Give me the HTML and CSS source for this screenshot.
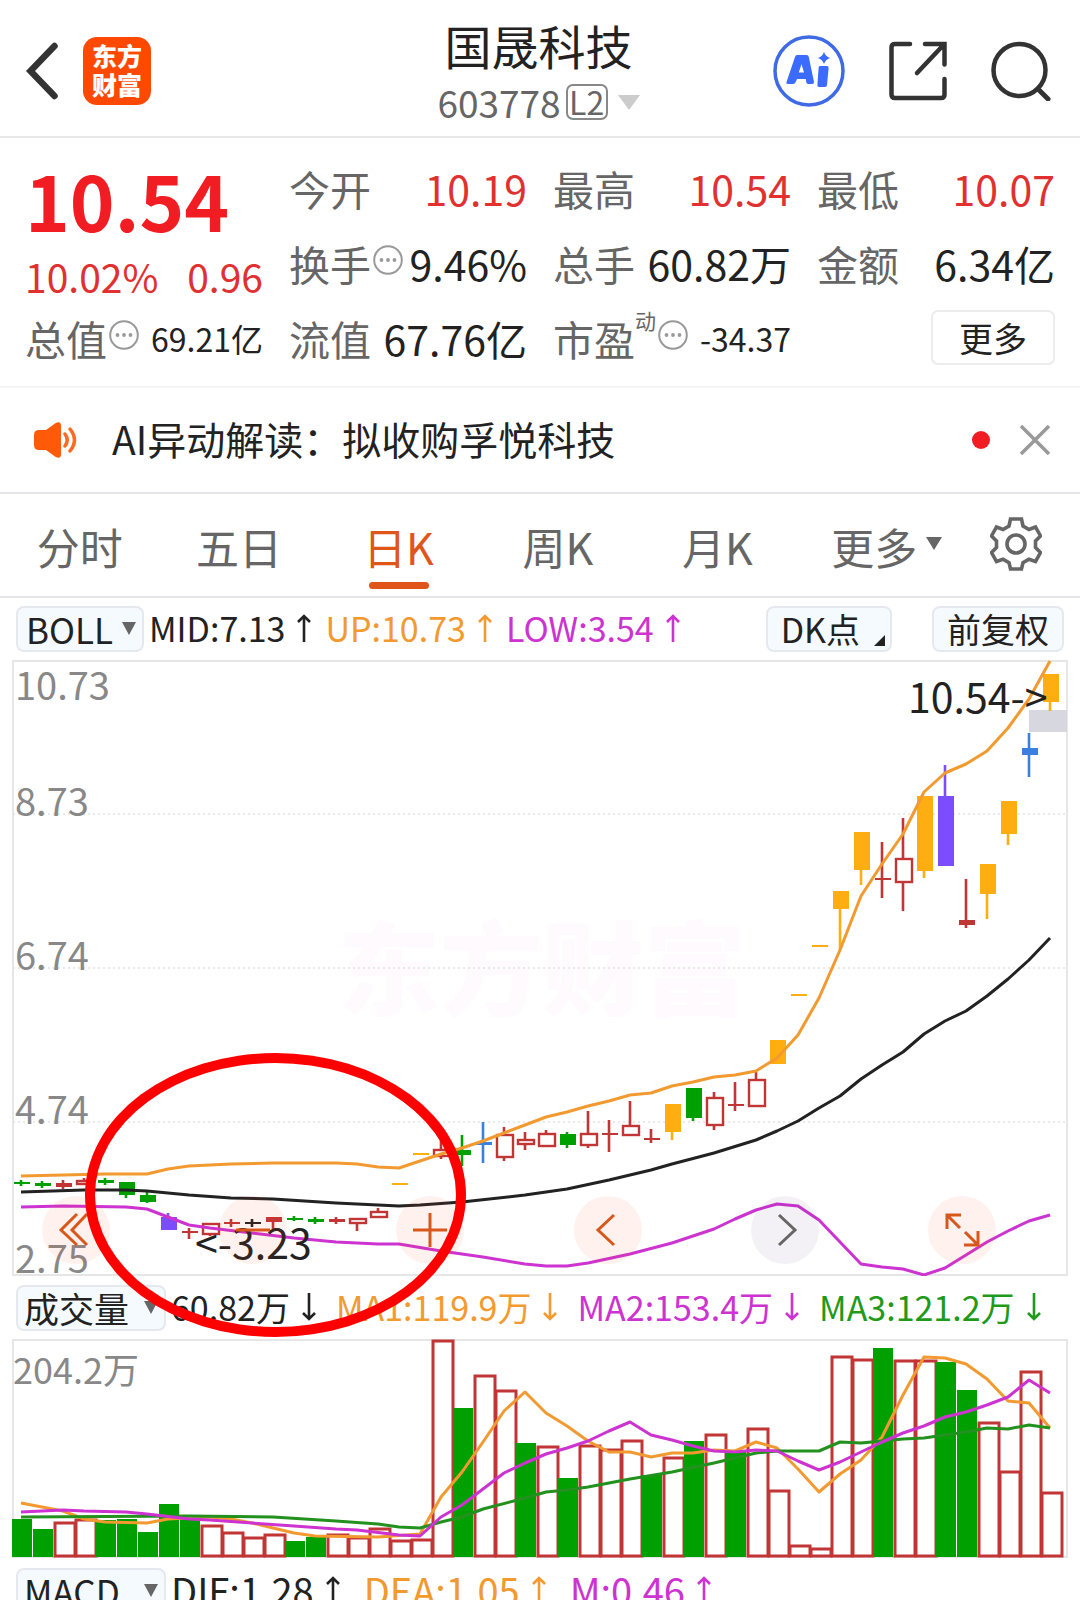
FILE: index.html
```html
<!DOCTYPE html>
<html lang="zh-CN">
<head>
  <meta charset="UTF-8" />
  <meta name="viewport" content="width=device-width, initial-scale=1.0"/>
  <title>国晟科技 603778</title>
  <link rel="stylesheet" href="styles.css">
</head>
<body>
  <svg class="defs" aria-hidden="true">
    <symbol id="up" viewBox="0 0 14 28"><path d="M7 28V2M1 8l6-6 6 6" fill="none" stroke="currentColor" stroke-width="2.6"/></symbol>
    <symbol id="down" viewBox="0 0 14 28"><path d="M7 0v26M1 20l6 6 6-6" fill="none" stroke="currentColor" stroke-width="2.6"/></symbol>
    <symbol id="dots" viewBox="0 0 30 30">
      <circle cx="15" cy="15" r="13.8" fill="none" stroke="#999" stroke-width="2"/>
      <g fill="#999"><circle cx="8.5" cy="15" r="1.9"/><circle cx="15" cy="15" r="1.9"/><circle cx="21.5" cy="15" r="1.9"/></g>
    </symbol>
  </svg>

  <header class="header">
    <div class="header-left">
      <button class="icon-btn" aria-label="返回">
        <svg width="32" height="58" viewBox="0 0 32 58"><path d="M28.500 4L4.500 29l24 25" fill="none" stroke="#333" stroke-width="6.500" stroke-linecap="round"/></svg>
      </button>
      <a class="logo" href="#"><span>东方</span><span>财富</span></a>
    </div>
    <div class="title">
      <h1>国晟科技</h1>
      <div class="code">603778<span class="level">L2</span><i class="caret-title"></i></div>
    </div>
    <div class="header-right">
      <button class="icon-btn" aria-label="AI">
        <svg width="72" height="72" viewBox="0 0 72 72">
          <circle cx="36" cy="36" r="34" fill="none" stroke="#3f6ae6" stroke-width="3.500"/>
          <path fill="#3b6bff" fill-rule="evenodd" d="M24 20h9.500q2 0 2.300 2L41 47q.2 2-1.800 2h-4q-1.700 0-2-2l-.4-3H24l-1.300 3q-.8 2-2.700 2h-5q-2.300 0-1.400-2.200L22 22q.7-2 2-2zM28.500 29l-2.700 8.500h5.200z"/>
          <path fill="#3b6bff" d="M47 31h7q1.800 0 1.600 2l-1.600 17q-.2 2-2 2h-6q-1.800 0-1.600-2l1.200-17q.1-2 1.400-2zM51 17q1.500 4.500 6 6-4.500 1.500-6 6-1.500-4.500-6-6 4.500-1.500 6-6z"/>
        </svg>
      </button>
      <button class="icon-btn" aria-label="分享">
        <svg width="58" height="60" viewBox="0 0 58 60"><path d="M21 3H6Q2.500 3 2.500 6.500v47Q2.500 57 6 57h46q3.500 0 3.500-3.500V38M36 3h19.500v20.500M54 4.500L28 32" fill="none" stroke="#333" stroke-width="4.500" stroke-linecap="round"/></svg>
      </button>
      <button class="icon-btn" aria-label="搜索">
        <svg width="60" height="60" viewBox="0 0 60 60"><circle cx="28.500" cy="29" r="26" fill="none" stroke="#333" stroke-width="4.500"/><path d="M47 48l10 10" stroke="#333" stroke-width="5" stroke-linecap="round"/></svg>
      </button>
    </div>
  </header>

  <section class="quote">
    <div class="price-box">
      <strong class="price">10.54</strong>
      <div class="change"><span>10.02%</span><span>0.96</span></div>
    </div>
    <div class="cell"><span class="name">今开</span><span class="value red">10.19</span></div>
    <div class="cell"><span class="name">最高</span><span class="value red">10.54</span></div>
    <div class="cell"><span class="name">最低</span><span class="value red">10.07</span></div>
    <div class="cell"><span class="name">换手<svg class="dots"><use href="#dots"/></svg></span><span class="value">9.46%</span></div>
    <div class="cell"><span class="name">总手</span><span class="value">60.82万</span></div>
    <div class="cell"><span class="name">金额</span><span class="value">6.34亿</span></div>
    <div class="cell"><span class="name">总值<svg class="dots"><use href="#dots"/></svg></span><span class="value small">69.21亿</span></div>
    <div class="cell"><span class="name">流值</span><span class="value">67.76亿</span></div>
    <div class="cell"><span class="name">市盈<sup>动</sup><svg class="dots"><use href="#dots"/></svg></span><span class="value small">-34.37</span></div>
    <div class="cell cell-more"><button class="more-btn">更多</button></div>
  </section>

  <section class="notice">
    <svg class="speaker" width="44" height="36" viewBox="0 0 44 36">
      <path d="M5 8h7l9-6.500Q27-2 27 4v28q0 6-6 2.500L12 28H5q-5 0-5-5V13q0-5 5-5z" fill="#ff5a0a"/>
      <path d="M31 12q4.500 6 0 12M36 7q9 11 0 22" fill="none" stroke="#ff6a20" stroke-width="3.500" stroke-linecap="round"/>
    </svg>
    <a class="notice-text" href="#">AI异动解读：拟收购孚悦科技</a>
    <i class="dot"></i>
    <button class="icon-btn" aria-label="关闭">
      <svg width="30" height="30" viewBox="0 0 30 30"><path d="M1 1l28 28M29 1L1 29" stroke="#999" stroke-width="3.500"/></svg>
    </button>
  </section>

  <nav class="tabs">
    <button class="tab">分时</button>
    <button class="tab">五日</button>
    <button class="tab active">日K</button>
    <button class="tab">周K</button>
    <button class="tab">月K</button>
    <button class="tab tab-more">更多<i class="caret"></i></button>
    <button class="icon-btn gear" aria-label="设置">
      <svg width="52" height="54" viewBox="0 0 52 54"><path d="M20.500 2h11l1.500 7 6 3.500 6.500-2.500 5 9-5 5v6.500l5 5-5 9-6.500-2.300-6 3.500-1.500 6.300h-11l-1.500-6.300-6-3.500-6.500 2.300-5-9 5-5V24l-5-5 5-9 6.500 2.500 6-3.500z" fill="none" stroke="#666" stroke-width="3.600"/><circle cx="26" cy="27" r="9" fill="none" stroke="#666" stroke-width="3.600"/></svg>
    </button>
  </nav>

  <main class="charts">
    <div class="bar">
      <label class="pick pick-boll"><select aria-label="主图指标"><option>BOLL</option></select></label>
      <div class="legend">
        <span>MID:7.13<svg class="arrow"><use href="#up"/></svg></span>
        <span class="orange">UP:10.73<svg class="arrow"><use href="#up"/></svg></span>
        <span class="purple">LOW:3.54<svg class="arrow"><use href="#up"/></svg></span>
      </div>
      <div class="bar-right">
        <button class="pill pill-dk">DK点<i class="corner"></i></button>
        <button class="pill">前复权</button>
      </div>
    </div>

    <div class="panel">
      <svg id="kline" class="chart" viewBox="12 660 1056 616"></svg>
      <div class="tools">
        <button class="tool" aria-label="最早"><svg viewBox="0 0 68 68"><path d="M35 18L19 34l16 15M45 18L30 34l15 15"/></svg></button>
        <button class="tool" aria-label="缩小"><svg viewBox="0 0 68 68"><path d="M17 34h34"/></svg></button>
        <button class="tool" aria-label="放大"><svg viewBox="0 0 68 68"><path d="M17 34h34M34 17v34"/></svg></button>
        <button class="tool" aria-label="向左"><svg viewBox="0 0 68 68"><path d="M40 19L24 34l16 15"/></svg></button>
        <button class="tool grey" aria-label="向右"><svg viewBox="0 0 68 68"><path d="M28 19l16 15-16 15"/></svg></button>
        <button class="tool" aria-label="全屏"><svg viewBox="0 0 68 68"><path d="M33 19H19v14M19 19l13 13M36 49h14V35M50 49L37 36"/></svg></button>
      </div>
    </div>

    <div class="bar bar-sub">
      <label class="pick"><select aria-label="副图指标"><option>成交量</option></select></label>
      <div class="legend legend-vol">
        <span>60.82万<svg class="arrow"><use href="#down"/></svg></span>
        <span class="orange">MA1:119.9万<svg class="arrow"><use href="#down"/></svg></span>
        <span class="purple">MA2:153.4万<svg class="arrow"><use href="#down"/></svg></span>
        <span class="green">MA3:121.2万<svg class="arrow"><use href="#down"/></svg></span>
      </div>
    </div>

    <div class="panel">
      <svg id="volume" class="chart" viewBox="12 1339 1056 219"></svg>
    </div>

    <div class="bar bar-macd">
      <label class="pick"><select aria-label="副图指标二"><option>MACD</option></select></label>
      <div class="legend legend-macd">
        <span>DIF:1.28<svg class="arrow"><use href="#up"/></svg></span>
        <span class="orange">DEA:1.05<svg class="arrow"><use href="#up"/></svg></span>
        <span class="purple">M:0.46<svg class="arrow"><use href="#up"/></svg></span>
      </div>
    </div>

    <div class="circle-mark"></div>
  </main>

  <script src="script.js"></script>
</body>
</html>
```
FILE: styles.css
```css
* {
  box-sizing: border-box;
}
body {
  margin: 0;
  height: 100vh;
  overflow: hidden;
  background: #fff;
  color: #222;
  font-family: "Noto Sans CJK SC", sans-serif;
}
button, select {
  font-family: inherit;
  color: inherit;
  cursor: pointer;
}
button {
  padding: 0;
  border: none;
  background: none;
}
a {
  color: inherit;
  text-decoration: none;
}
.defs {
  display: none;
}
.icon-btn {
  display: flex;
}

/* header */
.header {
  display: grid;
  grid-template-columns: 1fr auto 1fr;
  align-items: center;
  height: 138px;
  padding: 0 29px 0 26px;
  border-bottom: 2px solid #e8e8e8;
}
.header-left {
  display: flex;
  align-items: center;
  gap: 25px;
  padding-top: 6px;
}
.logo {
  display: flex;
  flex-direction: column;
  align-items: center;
  width: 68px;
  height: 68px;
  padding-top: 4px;
  border-radius: 14px;
  background: #ff4800;
  color: #fff;
  font-size: 25px;
  font-weight: 900;
  line-height: 29px;
}
.title {
  padding-top: 12px;
  text-align: center;
}
h1 {
  margin: 0;
  font-size: 47px;
  font-weight: 400;
  line-height: 56px;
}
.code {
  display: flex;
  align-items: center;
  justify-content: center;
  color: #666;
  font-size: 37px;
  line-height: 58px;
}
.level {
  width: 42px;
  height: 36px;
  margin-left: 5px;
  border: 2px solid #888;
  border-radius: 7px;
  font-size: 32px;
  line-height: 31px;
}
.caret-title {
  margin-left: 10px;
  border: 11px solid transparent;
  border-top: 15px solid #ccc;
  border-bottom: none;
}
.header-right {
  display: flex;
  align-items: center;
  justify-content: flex-end;
  gap: 44px;
  padding-top: 6px;
}

/* quote */
.quote {
  display: grid;
  grid-template-columns: repeat(4, 1fr);
  grid-auto-rows: 75px;
  column-gap: 26px;
  padding: 12px 25px 11px;
  border-bottom: 2px solid #f4f4f4;
}
.price-box {
  grid-row: span 2;
  color: #e03030;
}
.price {
  display: block;
  color: #f21d22;
  font-size: 76px;
  font-weight: 700;
  line-height: 98px;
}
.change {
  display: flex;
  justify-content: space-between;
  font-size: 39px;
  line-height: 56px;
}
.cell {
  display: flex;
  align-items: center;
  justify-content: space-between;
  font-size: 41px;
  line-height: 60px;
  white-space: nowrap;
}
.name {
  display: flex;
  align-items: center;
  color: #666;
}
.name sup {
  align-self: flex-start;
  font-size: 21px;
  line-height: 24px;
}
.dots {
  width: 30px;
  height: 30px;
  margin: 0 0 6px 2px;
}
.value.small {
  font-size: 32px;
}
.red {
  color: #e03030;
}
.cell-more {
  justify-content: flex-end;
}
.more-btn {
  width: 124px;
  height: 55px;
  border: 2px solid #ececec;
  border-radius: 7px;
  font-size: 34px;
  line-height: 48px;
}

/* notice */
.notice {
  display: flex;
  align-items: center;
  height: 106px;
  padding: 0 30px 0 34px;
  border-bottom: 2px solid #e6e6ea;
}
.notice-text {
  flex: 1;
  margin-left: 34px;
  padding-bottom: 4px;
  font-size: 39px;
}
.dot {
  width: 18px;
  height: 18px;
  margin-right: 30px;
  border-radius: 50%;
  background: #f21d22;
}

/* tabs */
.tabs {
  display: grid;
  grid-template-columns: repeat(6, 4fr) 3fr;
  height: 104px;
  padding-right: 4px;
  border-bottom: 2px solid #e6e6ea;
}
.tab {
  display: flex;
  flex-direction: column;
  align-items: center;
  color: #666;
  font-size: 43px;
  line-height: 104px;
}
.tab.active {
  color: #e0561a;
}
.tab.active::after {
  content: "";
  width: 60px;
  height: 7px;
  margin-top: -16px;
  border-radius: 4px;
  background: #e0561a;
}
.tab-more {
  flex-direction: row;
  justify-content: center;
  padding-left: 20px;
}
.caret {
  margin: 0 0 6px 9px;
  border: 8px solid transparent;
  border-top: 13px solid #666;
  border-bottom: none;
}
.gear {
  align-items: center;
  justify-content: center;
  padding-bottom: 4px;
}

/* charts */
.charts {
  position: relative;
}
.bar {
  display: flex;
  align-items: center;
  height: 62px;
  padding: 0 16px;
  white-space: nowrap;
}
.bar-sub {
  height: 63px;
}
.pick {
  position: relative;
}
.pick select {
  display: block;
  appearance: none;
  width: 150px;
  height: 46px;
  padding: 0 0 0 6px;
  border: 2px solid #e6e8f0;
  border-radius: 8px;
  background: #f5faff;
  font-size: 35px;
  line-height: 40px;
}
.pick-boll select {
  width: 128px;
  padding-left: 8px;
}
.pick::after {
  content: "";
  position: absolute;
  right: 8px;
  top: 16px;
  border: 7px solid transparent;
  border-top: 13px solid #666;
  border-bottom: none;
  pointer-events: none;
}
.legend {
  display: flex;
  gap: 14px;
  margin-left: 5px;
  padding-bottom: 2px;
  font-size: 34px;
  line-height: 46px;
}
.legend span {
  display: flex;
  align-items: center;
}
.legend-vol {
  gap: 20px;
}
.legend-macd {
  gap: 24px;
  font-size: 38px;
}
.arrow {
  width: 14px;
  height: 28px;
  margin-left: 12px;
}
.orange {
  color: #f29a30;
}
.purple {
  color: #cc33d0;
}
.green {
  color: #1f9a1a;
}
.bar-right {
  display: flex;
  gap: 40px;
  margin-left: auto;
}
.pill {
  position: relative;
  height: 46px;
  padding: 0 13px;
  border: 2px solid #e6e8f0;
  border-radius: 8px;
  background: #f5faff;
  font-size: 34px;
  line-height: 40px;
}
.pill-dk {
  padding: 0 30px 0 13px;
}
.corner {
  position: absolute;
  right: 5px;
  bottom: 4px;
  border-left: 11px solid transparent;
  border-bottom: 11px solid #222;
}
.panel {
  position: relative;
  padding: 0 12px;
}
.chart {
  display: block;
  width: 100%;
}
.tools {
  position: absolute;
  left: 42px;
  right: 84px;
  bottom: 12px;
  display: flex;
  justify-content: space-between;
}
.tool {
  width: 68px;
  height: 68px;
  border-radius: 50%;
  background: rgba(255, 80, 30, 0.08);
}
.tool path {
  fill: none;
  stroke: #d8581c;
  stroke-width: 3;
}
.tool.grey {
  background: rgba(90, 50, 130, 0.07);
}
.tool.grey path {
  stroke: #666;
}
.bar-macd {
  height: 66px;
}

/* red circle drawn over both charts */
.circle-mark {
  position: absolute;
  left: 85px;
  top: 455px;
  width: 381px;
  height: 284px;
  border: 10px solid #f00;
  border-radius: 50%;
  pointer-events: none;
}

/* svg chart texts */
.axis {
  fill: #888;
  font-size: 38px;
}
.axis-vol {
  fill: #888;
  font-size: 36px;
}
.mark {
  fill: #222;
  font-size: 41px;
}
.watermark {
  fill: #fefafe;
  font-size: 102px;
  font-weight: 900;
}
```
FILE: script.js
```js
const RED = '#c23535';
const GREEN = '#00a000';
const YELLOW = '#ffae12';
const BLUE = '#3a80dc';
const VIOLET = '#7c4dff';
const STEP = 21;
const cx = (i) => 21 + i * STEP;

// type, body top, body bottom, wick top, wick bottom
// r = hollow red, R = solid red, g = green, y = yellow, b = blue, v = violet, k = black
const candles = [
  ['g', 1182, 1184, 1180, 1186], ['g', 1183, 1186, 1181, 1188], ['R', 1183, 1187, 1180, 1189],
  ['r', 1180, 1185, 1178, 1185], ['g', 1180, 1183, 1178, 1185], ['g', 1182, 1195, 1182, 1198],
  ['g', 1195, 1202, 1192, 1203], ['v', 1217, 1230, 1213, 1230], ['R', 1231, 1233, 1228, 1239],
  ['r', 1223, 1235, 1223, 1236], ['R', 1222, 1224, 1219, 1227], ['k', 1222, 1224, 1219, 1227],
  ['R', 1217, 1222, 1217, 1229], ['g', 1218, 1220, 1216, 1221], ['g', 1219, 1222, 1217, 1224],
  ['R', 1219, 1222, 1217, 1224], ['r', 1218, 1224, 1218, 1231], ['r', 1211, 1218, 1208, 1218],
  ['y', 1183, 1185, 1184, 1184], ['y', 1153, 1155, 1154, 1154], ['r', 1149, 1157, 1140, 1159],
  ['g', 1150, 1155, 1135, 1166], ['b', 1142, 1145, 1122, 1163], ['r', 1134, 1158, 1127, 1161],
  ['r', 1139, 1145, 1132, 1150], ['r', 1133, 1147, 1130, 1147], ['g', 1134, 1145, 1132, 1148],
  ['r', 1133, 1146, 1111, 1148], ['R', 1133, 1135, 1120, 1152], ['r', 1125, 1136, 1101, 1136],
  ['R', 1138, 1140, 1129, 1143], ['y', 1104, 1132, 1104, 1140], ['g', 1088, 1118, 1088, 1121],
  ['r', 1097, 1126, 1092, 1130], ['R', 1104, 1106, 1082, 1111], ['r', 1079, 1107, 1072, 1107],
  ['y', 1040, 1064, 1040, 1064], ['y', 994, 996, 995, 995], ['y', 945, 947, 946, 946],
  ['y', 891, 909, 891, 950], ['y', 832, 870, 832, 885], ['R', 878, 880, 842, 898],
  ['r', 858, 883, 818, 911], ['y', 796, 871, 796, 878], ['v', 796, 866, 765, 866],
  ['R', 920, 925, 879, 928], ['y', 864, 894, 864, 919], ['y', 801, 834, 801, 845],
  ['b', 748, 755, 733, 777], ['y', 674, 702, 674, 711]
];

// [index, y] pairs
const up = [[0,1176],[4,1174],[6,1174],[7,1169],[8,1166],[10,1164],[12,1163],[15,1163],[16,1164],[17,1167],[18,1168],[19,1161],[20,1154],[21,1148],[22,1141],[23,1133],[24,1125],[25,1117],[26,1112],[27,1106],[28,1101],[29,1095],[30,1093],[31,1086],[32,1082],[33,1077],[34,1075],[35,1071],[36,1058],[37,1035],[38,998],[39,950],[40,896],[41,864],[42,834],[43,792],[44,773],[45,764],[46,751],[47,728],[48,699],[49,661]];
const mid = [[0,1192],[3,1190],[5,1190],[6,1191],[8,1195],[10,1198],[12,1199],[15,1203],[17,1205],[18,1206],[19,1205],[21,1202],[24,1195],[26,1189],[28,1180],[29,1175],[30,1170],[31,1164],[33,1153],[35,1140],[36,1131],[37,1121],[38,1108],[39,1096],[40,1079],[41,1065],[42,1052],[43,1034],[44,1021],[45,1011],[46,996],[47,979],[48,960],[49,938]];
const low = [[0,1207],[2,1206],[5,1207],[6,1209],[7,1217],[8,1225],[9,1228],[11,1233],[13,1238],[15,1242],[17,1244],[18,1244],[20,1251],[22,1257],[24,1264],[25,1266],[26,1266],[27,1263],[29,1254],[31,1243],[33,1229],[34,1219],[35,1210],[36,1204],[37,1206],[38,1220],[39,1242],[40,1264],[41,1267],[42,1269],[43,1275],[44,1268],[45,1255],[46,1242],[47,1231],[48,1221],[49,1215]];

// top of each volume bar, g = falling day
const volumes = ['g1519','g1529','r1522','r1519','g1520','g1519','g1532','g1504','g1517','r1525','r1532','r1537','r1534','g1541','g1537','r1534','r1537','r1528','r1540','r1539','r1340','g1408','r1375','r1390','g1443','r1446','g1478','r1445','r1449','r1440','g1475','r1457','g1441','r1434','g1452','r1428','r1490','r1545','r1548','r1356','r1359','g1348','r1360','r1360','g1362','g1390','r1422','r1471','r1371','r1492'];
const ma1 = [[0,1503],[1,1507],[2,1511],[3,1519],[4,1522],[6,1523],[7,1519],[9,1517],[10,1519],[11,1523],[12,1528],[13,1533],[14,1536],[17,1537],[19,1534],[20,1497],[21,1472],[22,1442],[23,1411],[24,1392],[25,1413],[26,1426],[27,1441],[28,1452],[29,1452],[30,1457],[31,1453],[32,1453],[33,1450],[34,1451],[35,1442],[36,1448],[37,1469],[38,1492],[39,1474],[40,1460],[41,1437],[42,1395],[43,1357],[44,1358],[45,1364],[46,1379],[47,1401],[48,1403],[49,1428]];
const ma2 = [[0,1512],[2,1510],[3,1511],[5,1512],[6,1514],[8,1519],[9,1520],[11,1523],[13,1526],[15,1529],[16,1530],[18,1535],[19,1536],[20,1517],[21,1505],[22,1489],[23,1473],[24,1463],[25,1454],[26,1448],[27,1441],[28,1431],[29,1422],[30,1435],[31,1440],[32,1446],[33,1451],[34,1452],[35,1450],[36,1451],[37,1461],[38,1470],[39,1462],[40,1452],[41,1442],[42,1433],[43,1426],[44,1417],[45,1412],[46,1405],[47,1397],[48,1380],[49,1393]];
const ma3 = [[0,1517],[8,1516],[12,1517],[15,1521],[17,1524],[18,1527],[19,1528],[20,1522],[21,1517],[22,1509],[24,1498],[25,1492],[26,1490],[27,1487],[28,1483],[29,1479],[31,1472],[33,1463],[35,1453],[36,1451],[38,1451],[39,1442],[40,1443],[41,1441],[42,1439],[43,1438],[44,1435],[45,1432],[46,1428],[47,1429],[48,1425],[49,1428]];

function line(points, color) {
  const pts = points.map(([i, y]) => cx(i) + ',' + y).join(' ');
  return `<polyline points="${pts}" fill="none" stroke="${color}" stroke-width="3" stroke-linejoin="round"/>`;
}

function frame(y, h) {
  return `<rect x="13" y="${y}" width="1054" height="${h}" fill="none" stroke="#e6e6e6" stroke-width="2"/>`;
}

function candle([type, top, bottom, high, lowest], i) {
  const color = { r: RED, R: RED, g: GREEN, y: YELLOW, b: BLUE, v: VIOLET, k: '#222' }[type];
  const x = cx(i);
  let out = `<path d="M${x} ${high}V${lowest}" stroke="${color}" stroke-width="2.6"/>`;
  if (type === 'r') {
    out += `<rect x="${x - 7}" y="${top + 1}" width="16" height="${bottom - top - 2}" fill="#fff" stroke="${color}" stroke-width="2.4"/>`;
  } else {
    out += `<rect x="${x - 7}" y="${top}" width="16" height="${bottom - top}" fill="${color}"/>`;
  }
  return out;
}

function drawKline() {
  let html = '<text class="watermark" x="338" y="1008">东方财富</text>' + frame(661, 614);
  [814, 968, 1122].forEach((y) => {
    html += `<path d="M13 ${y}H1067" stroke="#e2e2e2" stroke-width="1.500" stroke-dasharray="2 3"/>`;
  });
  [['10.73', 700], ['8.73', 816], ['6.74', 970], ['4.74', 1124], ['2.75', 1273]].forEach(([t, y]) => {
    html += `<text class="axis" x="15" y="${y}">${t}</text>`;
  });
  html += '<rect x="1029" y="710" width="38" height="22" fill="#d7d7df"/>';
  html += candles.map(candle).join('');
  html += line(up, '#f29a30') + line(mid, '#222') + line(low, '#cc33d0');
  html += '<text class="mark" x="908" y="713">10.54-&gt;</text>';
  html += '<text class="mark" x="195" y="1259">&lt;-3.23</text>';
  document.getElementById('kline').innerHTML = html;
}

function drawVolume() {
  let html = frame(1340, 217);
  html += '<text class="axis-vol" x="13" y="1384">204.2万</text>';
  volumes.forEach((v, i) => {
    const top = Number(v.slice(1));
    const x = cx(i) - 9;
    if (v[0] === 'g') {
      html += `<rect x="${x}" y="${top}" width="20" height="${1557 - top}" fill="${GREEN}"/>`;
    } else {
      html += `<rect x="${x + 1}" y="${top + 1}" width="20" height="${1555 - top}" fill="#fff" stroke="${RED}" stroke-width="3"/>`;
    }
  });
  html += line(ma1, '#f29a30') + line(ma3, '#23911e') + line(ma2, '#cc33d0');
  document.getElementById('volume').innerHTML = html;
}

drawKline();
drawVolume();
```
